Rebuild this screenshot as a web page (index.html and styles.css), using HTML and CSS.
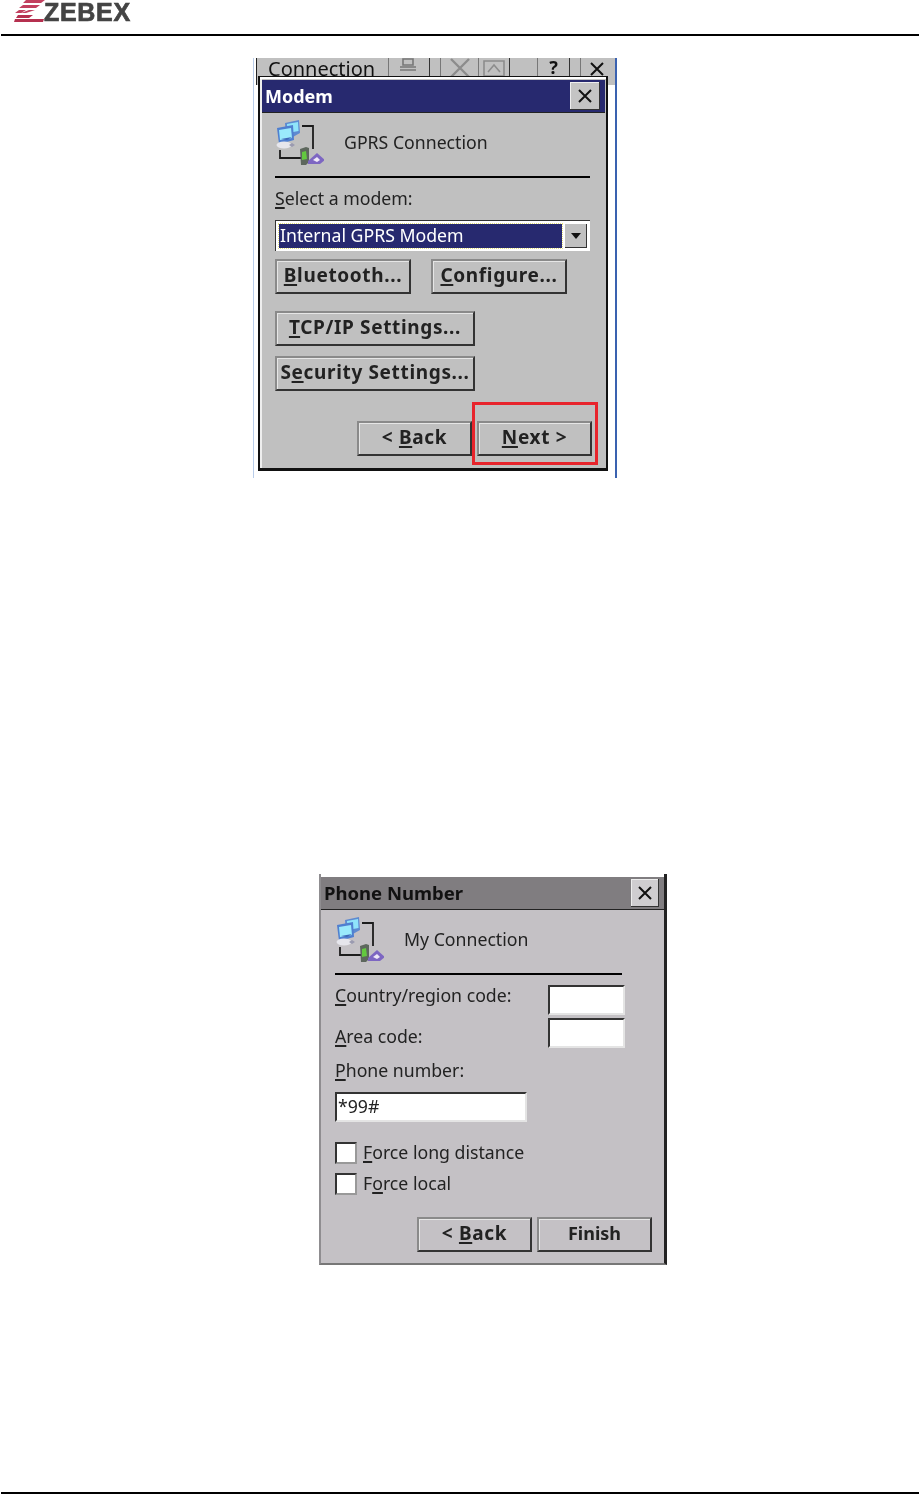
FILE: index.html
```html
<!DOCTYPE html>
<html lang="en">
<head>
<meta charset="utf-8">
<title>ZEBEX GPRS Connection</title>
<link rel="stylesheet" href="styles.css">
</head>
<body>
<svg class="defs" width="0" height="0" aria-hidden="true">
  <symbol id="net" viewBox="0 0 48 47">
    <path d="M26 7h11v23M4 31v8h22" fill="none" stroke="#1c1c1c" stroke-width="1.8"/>
    <path d="M9 4l14-3 1 13-9 5-5-2z" fill="#5e8ad0"/>
    <path d="M11 5l11-2 .6 9-11 2z" fill="#8fe4fb"/>
    <path d="M1 9l16-3 1 15-15 4z" fill="#4f7fd0"/>
    <path d="M3 11l12-2 1 10-12 2z" fill="#9aeafc"/>
    <path d="M5 20l11-2-5 3z" fill="#3f68b8"/>
    <ellipse cx="8" cy="26" rx="7.5" ry="3.5" fill="#e6e6ec"/>
    <path d="M13 26l3-2 3 2-3 2z" fill="#9a9ab0"/>
    <path d="M24 30l6-2 3 1v14l-3 3h-5z" fill="#5d675d"/>
    <path d="M26 33l4-1 1 8-5 1z" fill="#63c93f"/>
    <path d="M32 42l9-8 8 7-5 4H32z" fill="#7d66c2"/>
    <path d="M37 41l4-3 3 3-3 2z" fill="#efe8f8"/>
  </symbol>
  <symbol id="cross" viewBox="0 0 16 16">
    <path d="M2 2l12 12M14 2L2 14" fill="none" stroke="#111" stroke-width="2"/>
  </symbol>
</svg>
<div class="page">
  <header class="top">
    <div class="logo">
      <svg class="logo-mark" viewBox="0 0 32 23" aria-hidden="true">
        <path d="M12 0h19l-4 3H9zM9 5h17l-4 3H5zM12 10l-5 3H1l4-3zM21 10l-9 3H7l8-3z" fill="#c2405f"/>
        <path d="M4 15h15l-4 3H2zM1 19h29l-1 3H0z" fill="#b5304f"/>
      </svg>
      <span class="logo-text">ZEBEX</span>
    </div>
  </header>

  <section class="shot shot-one">
    <div class="toolbar">
      <span class="toolbar-title">Connection</span>
      <span class="tool tool-a"><svg viewBox="0 0 24 20" aria-hidden="true"><path d="M6 1h10v6H6zM3 9h16M3 12h16" fill="none" stroke="#777" stroke-width="1.6"/></svg></span>
      <span class="tool tool-b"><svg viewBox="0 0 24 20" aria-hidden="true"><path d="M3 1l18 18M21 1L3 19" fill="none" stroke="#8c8c8c" stroke-width="2.4"/></svg></span>
      <span class="tool tool-c"><svg viewBox="0 0 24 20" aria-hidden="true"><path d="M2 3h20v15H2zM6 14l6-7 6 7" fill="none" stroke="#8c8c8c" stroke-width="1.6"/></svg></span>
      <span class="tool tool-d">?</span>
      <span class="tool tool-e"><svg viewBox="0 0 16 16" aria-hidden="true"><use href="#cross"/></svg></span>
    </div>

    <div class="dialog dialog-one">
      <div class="titlebar titlebar-active">
        <span class="title-text">Modem</span>
        <span class="close"><svg viewBox="0 0 16 16" aria-hidden="true"><use href="#cross"/></svg></span>
      </div>
      <div class="body body-one">
        <div class="heading">
          <svg class="net-icon" aria-hidden="true"><use href="#net"/></svg>
          <span class="heading-text">GPRS Connection</span>
        </div>
        <div class="rule"></div>
        <div class="label label-modem"><span class="u">S</span>elect a modem:</div>
        <div class="combo">
          <div class="combo-field"><span class="combo-value">Internal GPRS Modem</span></div>
          <span class="combo-arrow"></span>
        </div>
        <div class="row row-config">
          <span class="btn btn-md"><span><span class="u">B</span>luetooth...</span></span>
          <span class="btn btn-md"><span><span class="u">C</span>onfigure...</span></span>
        </div>
        <div class="btn btn-lg btn-tcp"><span><span class="u">T</span>CP/IP Settings...</span></div>
        <div class="btn btn-lg btn-sec"><span>S<span class="u">e</span>curity Settings...</span></div>
        <div class="nav nav-one">
          <span class="btn btn-nav"><span>&lt; <span class="u">B</span>ack</span></span>
          <span class="btn btn-nav"><span><span class="u">N</span>ext &gt;</span></span>
        </div>
      </div>
    </div>
    <div class="callout"></div>
  </section>

  <section class="shot-two">
    <div class="titlebar titlebar-idle">
      <span class="title-text">Phone Number</span>
      <span class="close close-two"><svg viewBox="0 0 16 16" aria-hidden="true"><use href="#cross"/></svg></span>
    </div>
    <div class="body body-two">
      <div class="heading heading-two">
        <svg class="net-icon" aria-hidden="true"><use href="#net"/></svg>
        <span class="heading-text">My Connection</span>
      </div>
      <div class="rule rule-two"></div>
      <div class="codes">
        <div class="label code-a"><span class="u">C</span>ountry/region code:</div>
        <div class="input input-sm"></div>
        <div class="label code-b"><span class="u">A</span>rea code:</div>
        <div class="input input-sm"></div>
      </div>
      <div class="label label-phone"><span class="u">P</span>hone number:</div>
      <div class="input input-phone">*99#</div>
      <div class="check check-first"><span class="box"></span><span class="check-text"><span class="u">F</span>orce long distance</span></div>
      <div class="check check-second"><span class="box"></span><span class="check-text">F<span class="u">o</span>rce local</span></div>
      <div class="nav nav-two">
        <span class="btn btn-nav"><span>&lt; <span class="u">B</span>ack</span></span>
        <span class="btn btn-nav btn-finish"><span>Finish</span></span>
      </div>
    </div>
  </section>

  <footer class="bottom"></footer>
</div>
</body>
</html>
```

FILE: styles.css
```css
* { box-sizing: border-box; }
html, body { margin: 0; padding: 0; background: #fff; }
body { font-family: "Noto Sans", "DejaVu Sans", sans-serif; color: #111; overflow: hidden; }
.defs { position: absolute; }
.page { width: 919px; height: 1494px; display: flex; flex-direction: column; }
.top { height: 36px; border-bottom: 2px solid #000; margin-left: 1px; flex: none; }
.logo { display: flex; align-items: flex-end; height: 24px; margin-left: 13px; filter: blur(.5px); }
.logo-mark { width: 32px; height: 23px; flex: none; margin-bottom: 1px; }
.logo-text { font: bold 25px/24px "Liberation Sans", sans-serif; color: #444; letter-spacing: .7px; margin-left: -2px; -webkit-text-stroke: .7px #444; }
.u { text-decoration: underline; text-decoration-thickness: 2px; text-underline-offset: 2px; }

.shot-one { position: relative; flex: none; width: 364px; height: 420px; margin: 22px 0 0 253px; border-left: 1px solid #b9cdea; border-right: 2px solid #3a62b0; filter: blur(.5px); }
.toolbar { display: flex; height: 27px; margin-left: 2px; background: #c0c0c0; border-left: 1px solid #222; overflow: hidden; }
.toolbar-title { font-size: 20px; line-height: 22px; margin-left: 11px; width: 120px; flex: none; }
.tool { display: flex; justify-content: center; align-items: flex-start; height: 20px; font-weight: bold; font-size: 18px; line-height: 19px; flex: none; border-left: 1px solid #777; border-right: 1px solid #333; }
.tool svg { width: 24px; height: 20px; }
.tool-a { width: 42px; }
.tool-b { width: 38px; margin-left: 10px; border-right: 0; }
.tool-c { width: 32px; }
.tool-d { width: 33px; margin-left: 27px; }
.tool-e { width: 32px; margin-left: 10px; border-right: 0; }
.tool-e svg { width: 16px; height: 16px; margin-top: 3px; }

.dialog-one { position: absolute; left: 4px; top: 18px; width: 350px; height: 395px; border: 2px solid #111; border-top-width: 1px; border-bottom-width: 3px; padding: 3px 1px 0 2px; background: #c0c0c0; box-shadow: inset 0 2px #fff, inset 2px 0 #eee; }

.titlebar { height: 33px; display: flex; justify-content: space-between; align-items: center; font-weight: bold; font-size: 18px; padding: 0 5px 0 3px; border-bottom: 1px solid #222; }
.title-text { margin-bottom: 1px; }
.titlebar-active { background: #27296f; color: #fff; }
.titlebar-idle { background: #807d80; color: #111; margin-top: 3px; padding-left: 3px; font-size: 18.5px; }
.close { width: 30px; height: 28px; display: flex; align-items: center; justify-content: center; background: #c4c4c4; border-right: 1px solid #333; border-bottom: 1px solid #333; box-shadow: inset 1px 1px #eee; }
.close svg { width: 16px; height: 16px; }
.close-two { width: 28px; background: #cfcdd0; }

.body-one { padding: 6px 15px 0 13px; }
.heading { display: flex; align-items: center; gap: 20px; font-size: 17.7px; color: #222; padding-left: 1px; }
.heading-text { margin-bottom: 2px; }
.net-icon { width: 48px; height: 47px; flex: none; display: block; }
.rule { height: 2px; margin-top: 10px; background: #000; }
.label { font-size: 17.7px; line-height: 20px; height: 22px; color: #222; }
.label-modem { margin-top: 10px; }

.combo { display: flex; align-items: center; gap: 3px; height: 31px; margin-top: 10px; padding: 3px; background: #fff; border-top: 1px solid #333; border-left: 1px solid #333; }
.combo-field { flex: 1; height: 24px; background: #27296f; outline: 1px dotted #e7e27c; display: flex; align-items: center; }
.combo-value { color: #fff; font-size: 17.7px; line-height: 22px; margin-bottom: 2px; padding-left: 1px; }
.combo-arrow { width: 22px; height: 24px; background: #c0c0c0; border-right: 1px solid #333; border-bottom: 1px solid #333; position: relative; flex: none; display: flex; align-items: center; justify-content: center; }
.combo-arrow::after { content: ""; border: 5px solid transparent; border-top: 6px solid #111; border-bottom: 0; }

.row { display: flex; gap: 20px; }
.row-config { margin-top: 8px; }
.btn { display: flex; align-items: center; justify-content: center; height: 35px; padding-bottom: 3px; background: #c0c0c0; font-weight: bold; font-size: 19px; letter-spacing: .65px; color: #222; border: 2px solid; border-color: #8a8a8a #333 #333 #8a8a8a; box-shadow: inset 1px 1px #e6e6e6; white-space: nowrap; flex: none; }
.btn-md { width: 136px; }
.btn-lg { width: 200px; }
.btn-tcp { margin-top: 17px; }
.btn-sec { margin-top: 10px; }
.btn-nav { width: 115px; }
.btn-finish { font-size: 18px; letter-spacing: 0; }
.nav { display: flex; justify-content: flex-end; gap: 5px; }
.nav-one { margin-top: 30px; padding-right: 0; margin-right: -2px; }

.callout { position: absolute; left: 218px; top: 344px; width: 126px; height: 63px; border: 3px solid #e8242c; }

.shot-two { flex: none; width: 348px; height: 391px; margin: 396px 0 0 319px; background: #c4c1c5; border-left: 2px solid #8f8d90; border-right: 3px solid #222; border-bottom: 2px solid #777; box-shadow: inset 0 3px #fff; padding-top: 0; filter: blur(.5px); }
.shot-two .titlebar { padding-right: 5px; }
.body-two { padding: 6px 0 0 14px; }
.body-two .btn { background: #c4c1c5; }
.heading-two { padding-left: 1px; }
.rule-two { width: 287px; }
.codes { display: grid; grid-template-columns: 213px 77px; row-gap: 3px; margin-top: 10px; }
.code-a { align-self: start; }
.code-b { align-self: end; }
.input { background: #fff; border: 2px solid; border-color: #333 #e4e4e4 #e4e4e4 #333; font-size: 17.7px; line-height: 24px; padding-left: 1px; color: #222; }
.input-sm { height: 30px; }
.label-phone { margin-top: 12px; }
.input-phone { width: 192px; height: 30px; margin-top: 10px; }
.check { display: flex; align-items: center; gap: 6px; height: 22px; font-size: 17.7px; color: #222; }
.check-text { margin-bottom: 2px; }
.check-first { margin-top: 20px; }
.check-second { margin-top: 9px; }
.box { width: 22px; height: 22px; background: #fff; border: 2px solid; border-color: #333 #999 #999 #333; flex: none; }
.nav-two { margin-top: 22px; padding-right: 12px; }

.bottom { margin-top: auto; height: 2px; background: #000; margin-left: 1px; flex: none; }
```
